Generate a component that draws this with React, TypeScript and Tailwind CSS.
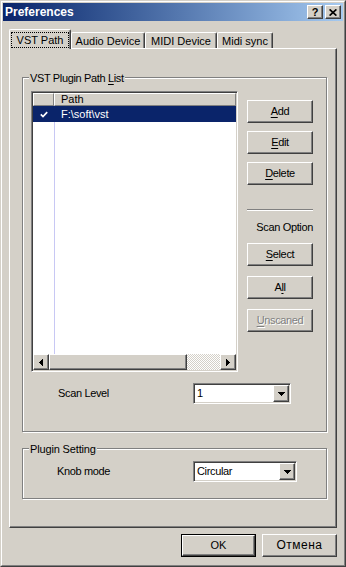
import React from "react";

const RAISED =
  "border border-t-white border-l-white border-r-[#404040] border-b-[#404040] shadow-[inset_-1px_-1px_0_#808080]";
const SUNKEN =
  "border border-t-[#808080] border-l-[#808080] border-r-white border-b-white shadow-[inset_1px_1px_0_#404040,inset_-1px_-1px_0_#d4d0c8]";
const ETCHED = "border border-[#808080] shadow-[inset_1px_1px_0_#ffffff,1px_1px_0_#ffffff]";

function U({ children }: { children: React.ReactNode }) {
  return <span className="underline underline-offset-[2px] decoration-1">{children}</span>;
}

function Button({ children, className = "" }: { children: React.ReactNode; className?: string }) {
  return (
    <div className={`${RAISED} bg-[#d4d0c8] h-[23px] flex items-center justify-center leading-[13px] ${className}`}>
      {children}
    </div>
  );
}

function DownArrow() {
  return (
    <svg width="7" height="4" viewBox="0 0 7 4" shapeRendering="crispEdges">
      <rect x="0" y="0" width="7" height="1" fill="#000" />
      <rect x="1" y="1" width="5" height="1" fill="#000" />
      <rect x="2" y="2" width="3" height="1" fill="#000" />
      <rect x="3" y="3" width="1" height="1" fill="#000" />
    </svg>
  );
}

function LeftArrow() {
  return (
    <svg width="4" height="7" viewBox="0 0 4 7" shapeRendering="crispEdges">
      <rect x="3" y="0" width="1" height="7" fill="#000" />
      <rect x="2" y="1" width="1" height="5" fill="#000" />
      <rect x="1" y="2" width="1" height="3" fill="#000" />
      <rect x="0" y="3" width="1" height="1" fill="#000" />
    </svg>
  );
}

function RightArrow() {
  return (
    <svg width="4" height="7" viewBox="0 0 4 7" shapeRendering="crispEdges">
      <rect x="0" y="0" width="1" height="7" fill="#000" />
      <rect x="1" y="1" width="1" height="5" fill="#000" />
      <rect x="2" y="2" width="1" height="3" fill="#000" />
      <rect x="3" y="3" width="1" height="1" fill="#000" />
    </svg>
  );
}

function Combo({ value, className }: { value: string; className: string }) {
  return (
    <div className={`${SUNKEN} ${className} h-[21px] p-px bg-white flex`}>
      <div className="flex-1 pl-[2px] flex items-center leading-[13px]">{value}</div>
      <div className={`${RAISED} w-[16px] h-full bg-[#d4d0c8] flex items-center justify-center`}>
        <DownArrow />
      </div>
    </div>
  );
}

function Tab({ label, className }: { label: string; className: string }) {
  return (
    <div
      className={`${className} h-[16px] bg-[#d4d0c8] border-t border-l border-r border-t-white border-l-white border-r-[#404040] shadow-[inset_-1px_0_0_#808080] rounded-t-[2px] flex justify-center pt-[2px] leading-[13px] whitespace-nowrap`}
    >
      {label}
    </div>
  );
}

function ListView() {
  return (
    <div className={`${SUNKEN} w-[207px] h-[281px] p-px bg-white flex flex-col shrink-0 tracking-[0px]`}>
      <div className="h-[13px] flex bg-[#d4d0c8] shrink-0">
        <div className="w-[21px] border border-t-white border-l-white border-r-[#808080] border-b-[#808080]" />
        <div className="flex-1 border border-t-white border-l-white border-r-[#808080] border-b-[#808080] pl-[6px] leading-[11px]">
          Path
        </div>
      </div>
      <div className="h-[16px] flex bg-[#0a246a] text-white shrink-0">
        <div className="w-[21px] flex items-center justify-center">
          <svg width="8" height="7" viewBox="0 0 8 7">
            <path d="M0.8 3.4 L3 5.6 L7.2 1.2" stroke="#ffffff" strokeWidth="1.7" fill="none" />
          </svg>
        </div>
        <div className="pl-[7px] leading-[16px]">{"F:\\soft\\vst"}</div>
      </div>
      <div className="flex-1 flex">
        <div className="w-[21px]" />
        <div className="border-l border-[#c8c8f4]" />
      </div>
      <div className="h-[16px] flex shrink-0">
        <div className={`${RAISED} w-[16px] bg-[#d4d0c8] flex items-center justify-center`}>
          <LeftArrow />
        </div>
        <div className={`${RAISED} w-[138px] bg-[#d4d0c8]`} />
        <div className="flex-1 [background-image:repeating-conic-gradient(#d4d0c8_0_25%,#ffffff_0_50%)] [background-size:2px_2px]" />
        <div className={`${RAISED} w-[16px] bg-[#d4d0c8] flex items-center justify-center`}>
          <RightArrow />
        </div>
      </div>
    </div>
  );
}

export default function App() {
  return (
    <div className="w-[346px] h-[567px] bg-[#d4d0c8] border border-t-[#d4d0c8] border-l-[#d4d0c8] border-r-[#404040] border-b-[#404040] [font-family:'Liberation_Sans',Arial,sans-serif] text-[11px] tracking-[-0.35px] text-black select-none">
      <div className="h-full border border-t-white border-l-white border-r-[#808080] border-b-[#808080] p-px flex flex-col">
        {/* Title bar */}
        <div className="h-[18px] shrink-0 flex items-center bg-linear-to-r from-[#0a246a] to-[#a6caf0] pl-[2px] pr-[2px]">
          <span className="flex-1 text-white font-bold text-[12px] tracking-[0px] leading-[14px]">Preferences</span>
          <div className={`${RAISED} w-[16px] h-[14px] bg-[#d4d0c8] flex items-center justify-center font-bold text-[11px] leading-[11px] tracking-[0px]`}>
            ?
          </div>
          <div className={`${RAISED} ml-[2px] w-[16px] h-[14px] bg-[#d4d0c8] flex items-center justify-center`}>
            <svg width="8" height="7" viewBox="0 0 8 7">
              <path d="M0.6 0.4 L7.4 6.6 M7.4 0.4 L0.6 6.6" stroke="#000" strokeWidth="1.7" />
            </svg>
          </div>
        </div>

        {/* Tabs */}
        <div className="mt-[8px] ml-[6px] h-[19px] flex items-end relative z-10 shrink-0 tracking-[0px]">
          <div className="w-[62px] h-[20px] -mb-px bg-[#d4d0c8] border-t border-l border-r border-t-white border-l-white border-r-[#404040] shadow-[inset_-1px_0_0_#808080] rounded-t-[2px] flex justify-center pt-[2px]">
            <span className="w-[58px] h-[16px] border border-dotted border-black flex justify-center leading-[14px]">
              VST Path
            </span>
          </div>
          <Tab label="Audio Device" className="w-[74px]" />
          <Tab label="MIDI Device" className="w-[72px]" />
          <Tab label="Midi sync" className="w-[56px]" />
        </div>

        {/* Panel */}
        <div className={`${RAISED} ml-[6px] w-[328px] h-[480px] shrink-0 pt-[28px] pl-[12px] flex flex-col`}>
          {/* Group 1 */}
          <div className={`${ETCHED} relative w-[305px] h-[355px] shrink-0`}>
            <div className="absolute left-[6px] -top-[6px] px-[1px] bg-[#d4d0c8] leading-[13px] whitespace-nowrap">
              VST Plugin Path <U>L</U>ist
            </div>
            <div className="flex pl-[8px] pt-[13px]">
              <ListView />
              <div className="ml-[9px] pt-[9px] w-[66px] flex flex-col">
                <Button>
                  <U>A</U>dd
                </Button>
                <Button className="mt-[8px]">
                  <U>E</U>dit
                </Button>
                <Button className="mt-[8px]">
                  <U>D</U>elete
                </Button>
                <div className="mt-[24px] h-[2px] border-t border-t-[#808080] border-b border-b-white" />
                <div className="mt-[10px] text-right leading-[13px] whitespace-nowrap">Scan Option</div>
                <Button className="mt-[9px]">
                  <U>S</U>elect
                </Button>
                <Button className="mt-[10px]">
                  A<U>l</U>l
                </Button>
                <Button className="mt-[10px] text-[#808080] [text-shadow:1px_1px_0_#ffffff]">
                  <U>U</U>nscaned
                </Button>
              </div>
            </div>
            <div className="mt-[11px] pl-[35px] flex items-center">
              <div className="w-[135px] leading-[13px]">Scan Level</div>
              <Combo value="1" className="w-[98px]" />
            </div>
          </div>

          {/* Group 2 */}
          <div className={`${ETCHED} relative mt-[16px] w-[305px] h-[51px] shrink-0`}>
            <div className="absolute left-[6px] -top-[6px] px-[1px] bg-[#d4d0c8] leading-[13px] whitespace-nowrap tracking-[-0.15px]">
              Plugin Setting
            </div>
            <div className="pt-[12px] pl-[34px] flex items-center">
              <div className="w-[136px] leading-[13px]">Knob mode</div>
              <Combo value="Circular" className="w-[104px]" />
            </div>
          </div>
        </div>

        {/* Bottom buttons */}
        <div className="mt-[6px] pr-[6px] flex justify-end gap-[6px] shrink-0">
          <div className="w-[75px] h-[23px] border border-black">
            <div className={`${RAISED} h-full bg-[#d4d0c8] flex items-center justify-center leading-[13px] tracking-[0px]`}>OK</div>
          </div>
          <Button className="w-[75px] text-[12px] tracking-[0.5px]">Отмена</Button>
        </div>
      </div>
    </div>
  );
}
